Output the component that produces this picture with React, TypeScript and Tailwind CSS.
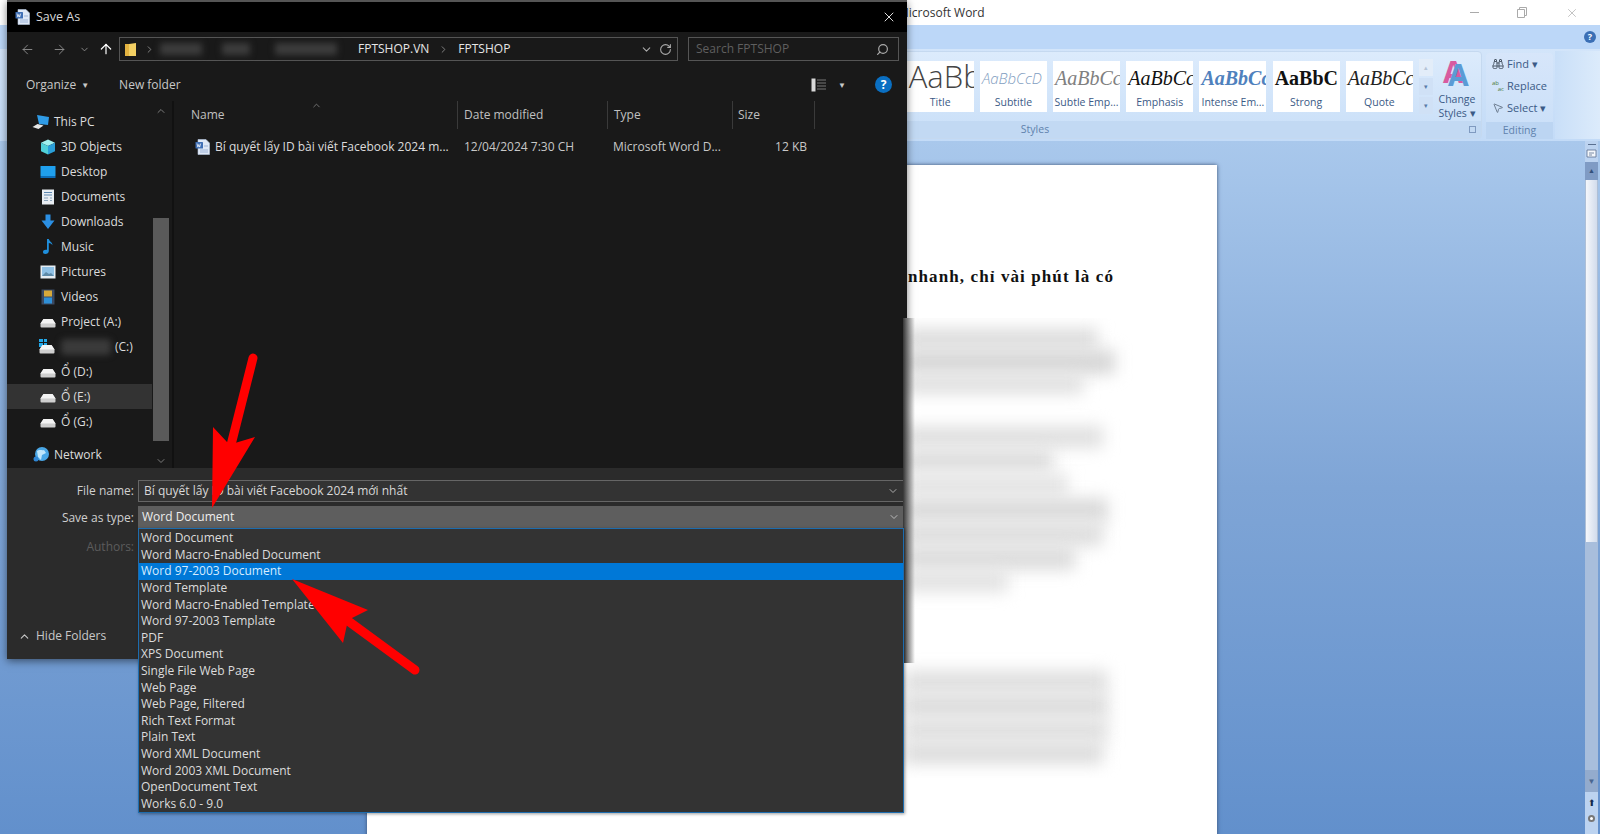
import React from "react";
import { ArrowLeft, ArrowRight, ArrowUp, Binoculars, ChevronDown, ChevronRight, ChevronUp, MousePointer2, RotateCw, Search, X } from "lucide-react";

const saveTypes = [
  "Word Document",
  "Word Macro-Enabled Document",
  "Word 97-2003 Document",
  "Word Template",
  "Word Macro-Enabled Template",
  "Word 97-2003 Template",
  "PDF",
  "XPS Document",
  "Single File Web Page",
  "Web Page",
  "Web Page, Filtered",
  "Rich Text Format",
  "Plain Text",
  "Word XML Document",
  "Word 2003 XML Document",
  "OpenDocument Text",
  "Works 6.0 - 9.0",
];

const styleTiles = [
  { name: "Title", sample: "AaBb", cls: "text-[31px] font-light text-[#444] pb-[4px] leading-[30px]" },
  { name: "Subtitle", sample: "AaBbCcD", cls: "italic text-[15px] text-[#7f9dc0] font-light" },
  { name: "Subtle Emp...", sample: "AaBbCc", cls: "font-['Liberation_Serif',serif] italic text-[20px] text-[#808080]" },
  { name: "Emphasis", sample: "AaBbCc", cls: "font-['Liberation_Serif',serif] italic text-[20px] text-[#111]" },
  { name: "Intense Em...", sample: "AaBbCc", cls: "font-['Liberation_Serif',serif] italic font-bold text-[20px] text-[#4f81bd]" },
  { name: "Strong", sample: "AaBbC", cls: "font-['Liberation_Serif',serif] font-bold text-[20px] text-[#111]" },
  { name: "Quote", sample: "AaBbCc", cls: "font-['Liberation_Serif',serif] italic text-[20px] text-[#222]" },
];

const blurBars = [
  { top: 10, w: 195, h: 22, c: "#dedede" },
  { top: 0, w: 212, h: 24, c: "#d6d6d6" },
  { top: 0, w: 180, h: 20, c: "#e0e0e0" },
  { top: 32, w: 200, h: 22, c: "#e0e0e0" },
  { top: 2, w: 150, h: 22, c: "#dcdcdc" },
  { top: 2, w: 165, h: 22, c: "#e4e4e4" },
  { top: 2, w: 205, h: 24, c: "#dadada" },
  { top: 0, w: 200, h: 24, c: "#dedede" },
  { top: 0, w: 172, h: 24, c: "#dcdcdc" },
  { top: 0, w: 105, h: 22, c: "#e2e2e2" },
  { top: 78, w: 205, h: 24, c: "#e0e0e0" },
  { top: 0, w: 205, h: 24, c: "#dcdcdc" },
  { top: 0, w: 205, h: 24, c: "#e0e0e0" },
  { top: 0, w: 200, h: 22, c: "#dcdcdc" },
];

const DriveIcon = () => (
  <svg width="16" height="11" viewBox="0 0 16 11" className="mt-[4px]">
    <path d="M3.500 1h9L15.500 5.500V8.500a1 1 0 0 1-1 1H1.500a1 1 0 0 1-1-1V5.500z" fill="#cfcfcf" />
    <path d="M0.500 5.500L3.500 1h9L15.500 5.500z" fill="#f4f4f4" />
  </svg>
);

const WordDocIcon = ({ size = 16 }: { size?: number }) => (
  <svg width={size} height={size} viewBox="0 0 16 16">
    <path d="M3 0.500h8l3.500 3.500v11.500H3z" fill="#dfe8f6" stroke="#b6c6df" strokeWidth="0.600" />
    <rect x="0.500" y="3" width="7.500" height="6.500" rx="0.600" fill="#3f6fb5" />
    <path d="M2 4.500l0.900 3.600 0.900-2.600 0.900 2.600L5.700 4.500" fill="none" stroke="#fff" strokeWidth="0.700" />
    <path d="M9 7h4M5 11h8M5 13h8" stroke="#8ba6cf" strokeWidth="0.800" />
  </svg>
);

const navIcons: Record<string, React.ReactNode> = {
  pc: (
    <svg width="18" height="16" viewBox="0 0 18 16">
      <path d="M5 1l12 2-1 8-9-1z" fill="#2f9be6" />
      <path d="M0.500 13l5-3 6 1.500-5 3.500z" fill="#e6e6e6" />
    </svg>
  ),
  cube: (
    <svg width="16" height="16" viewBox="0 0 16 16">
      <path d="M8 0.500l7 3.200-7 3.300-7-3.300z" fill="#9ff0ee" />
      <path d="M1 3.700l7 3.300v8.500l-7-3.300z" fill="#4fd0d8" />
      <path d="M15 3.700l-7 3.300v8.500l7-3.300z" fill="#2a9fd8" />
    </svg>
  ),
  desktop: (
    <svg width="16" height="14" viewBox="0 0 16 14">
      <rect x="0.500" y="1" width="15" height="10" rx="0.500" fill="#1fa0ee" />
      <rect x="0.500" y="11" width="15" height="2" fill="#0b6cb8" />
    </svg>
  ),
  docs: (
    <svg width="14" height="16" viewBox="0 0 14 16">
      <rect x="1" y="0.500" width="12" height="15" fill="#e8edf2" />
      <path d="M3 3.500h8M3 6h8" stroke="#5c87b0" strokeWidth="1.200" />
      <path d="M3 9h4M3 11.500h4M9 9h2M9 11.500h2" stroke="#8aa3b9" strokeWidth="1" />
    </svg>
  ),
  down: (
    <svg width="14" height="16" viewBox="0 0 14 16">
      <path d="M4.500 0.500h5v6h4L7 15 0.500 6.500h4z" fill="#2b8fe3" />
    </svg>
  ),
  music: (
    <svg width="12" height="17" viewBox="0 0 12 17">
      <path d="M5 1h1.800c.4 2.500 3.700 3.200 3.700 6.200-1-1.600-2.400-2-3.700-2.200V13c0 1.800-1.600 3-3.400 3S1 15 1 13.700 2.500 11.400 5 11.800z" fill="#1f8fdc" />
    </svg>
  ),
  pics: (
    <svg width="16" height="14" viewBox="0 0 16 14">
      <rect x="0.500" y="0.500" width="15" height="13" fill="#e6edf2" />
      <rect x="2" y="2" width="12" height="9" fill="#8fc1e5" />
      <path d="M2 11l4-4 3 2 2-1 3 3z" fill="#5d8aa8" />
    </svg>
  ),
  videos: (
    <svg width="14" height="16" viewBox="0 0 14 16">
      <rect x="0.500" y="0.500" width="13" height="15" fill="#3b4a63" />
      <rect x="3" y="1.500" width="8" height="6" fill="#d7a93a" />
      <rect x="3" y="8.500" width="8" height="6" fill="#2f90d8" />
    </svg>
  ),
  cdrive: (
    <span className="relative inline-block h-[16px] w-[18px]">
      <span className="absolute left-0 top-0 grid h-[8px] w-[8px] grid-cols-2 gap-[1px]">
        <span className="bg-[#22a7e8]" />
        <span className="bg-[#22a7e8]" />
        <span className="bg-[#22a7e8]" />
        <span className="bg-[#22a7e8]" />
      </span>
      <span className="absolute bottom-0 left-0">
        <DriveIcon />
      </span>
    </span>
  ),
  net: (
    <svg width="17" height="17" viewBox="0 0 17 17">
      <circle cx="9" cy="8" r="7" fill="#4aa7e6" />
      <path d="M4 5c3-2 5 0 7-1l2 3-4 2-1 5-3-3z" fill="#bfe6fb" />
      <circle cx="3" cy="13" r="2.500" fill="#2f86d4" />
    </svg>
  ),
};

const navItems: { icon: string; label: React.ReactNode; indent: string; active?: boolean }[] = [
  { icon: "pc", label: "This PC", indent: "pl-[25px]" },
  { icon: "cube", label: "3D Objects", indent: "pl-[32px]" },
  { icon: "desktop", label: "Desktop", indent: "pl-[32px]" },
  { icon: "docs", label: "Documents", indent: "pl-[32px]" },
  { icon: "down", label: "Downloads", indent: "pl-[32px]" },
  { icon: "music", label: "Music", indent: "pl-[32px]" },
  { icon: "pics", label: "Pictures", indent: "pl-[32px]" },
  { icon: "videos", label: "Videos", indent: "pl-[32px]" },
  { icon: "drive", label: "Project (A:)", indent: "pl-[32px]" },
  {
    icon: "cdrive",
    label: (
      <span className="flex items-center gap-[4px]">
        <span className="h-[16px] w-[50px] rounded-sm bg-[#3a3a3a] blur-[3px]" />
        (C:)
      </span>
    ),
    indent: "pl-[32px]",
  },
  { icon: "drive", label: "Ổ (D:)", indent: "pl-[32px]" },
  { icon: "drive", label: "Ổ (E:)", indent: "pl-[32px]", active: true },
  { icon: "drive", label: "Ổ (G:)", indent: "pl-[32px]" },
];

function Ribbon() {
  return (
    <div className="flex h-[92px] shrink-0 bg-gradient-to-b from-[#d3e5fa] to-[#c3dbf7] pb-[2px] pt-[2px]">
      <div className="ml-[588px] flex w-[894px] flex-col rounded-sm border border-[#c5d9f0] bg-gradient-to-b from-[#dcebfc] to-[#c9dff8]">
        <div className="flex flex-1 items-center justify-end pr-[2px]">
          {styleTiles.map((t) => (
            <div key={t.name} className="mr-[6.200px] flex h-[51px] w-[67px] flex-col items-center overflow-hidden bg-white">
              <span className={`flex h-[34px] w-full shrink-0 items-center whitespace-nowrap pl-[2px] ${t.cls}`}>{t.sample}</span>
              <span className="whitespace-nowrap text-[10.500px] leading-[15px] text-[#3b5a86]">{t.name}</span>
            </div>
          ))}
          <div className="flex h-[55px] w-[14px] flex-col gap-[2px] text-[7px] leading-none text-[#5a7ba8]">
            <span className="flex flex-1 items-center justify-center bg-[#e3edf9] text-[#b5c4d6]">▴</span>
            <span className="flex flex-1 items-center justify-center bg-[#d0e1f6]">▾</span>
            <span className="flex flex-1 items-center justify-center bg-[#d0e1f6]">▾</span>
          </div>
          <div className="ml-[2px] flex w-[44px] flex-col items-center">
            <span className="relative h-[36px] w-[30px] text-[30px] font-bold leading-[36px]">
              <span className="absolute left-[1px] top-0 text-[#d85ba0]">A</span>
              <span className="absolute left-[6px] top-[3px] text-[#5b9bd5]">A</span>
            </span>
            <span className="pt-[2px] text-center text-[10.500px] leading-[14px] text-[#3b5a86]">
              <span className="block">Change</span>
              <span className="block whitespace-nowrap">Styles ▾</span>
            </span>
          </div>
        </div>
        <div className="relative flex h-[17px] items-center justify-center bg-[#c2d9f3] text-[10.500px] text-[#5f82ad]">
          Styles
          <span className="absolute right-[5px] top-[5px] h-[7px] w-[7px] border border-[#7f9ac0]" />
        </div>
      </div>
      <div className="ml-[4px] mt-[2px] flex w-[67px] flex-col rounded-sm bg-gradient-to-b from-[#d7e6fa] to-[#c9dff8]">
        <div className="flex flex-1 flex-col gap-[5px] pl-[6px] pt-[2px] text-[11px] leading-[17px] text-[#3b5a86]">
          <span className="flex items-center gap-[3px] whitespace-nowrap">
            <Binoculars size={12} className="text-[#4d5a6a]" />
            Find ▾
          </span>
          <span className="flex items-center gap-[3px] whitespace-nowrap">
            <span className="flex w-[12px] flex-col text-[6px] leading-[6px] text-[#4a7c3a]">
              <span>ab</span>
              <span className="text-right">ac</span>
            </span>
            Replace
          </span>
          <span className="flex items-center gap-[3px] whitespace-nowrap">
            <MousePointer2 size={12} className="text-[#6f7f93]" />
            Select ▾
          </span>
        </div>
        <div className="flex h-[17px] items-center justify-center bg-[#bcd5f2] text-[10.500px] text-[#5f82ad]">Editing</div>
      </div>
      <div className="ml-[2px] flex-1 bg-gradient-to-r from-[#c9dff8] to-[#dcebfb]" />
    </div>
  );
}

function WordWindow() {
  return (
    <div className="flex h-[834px] w-[1600px] flex-col bg-white">
      <div className="flex h-[25px] shrink-0 items-center bg-white text-[#333]">
        <span className="ml-[898px] text-[12px]">Microsoft Word</span>
        <div className="ml-auto flex items-center gap-[38px] pr-[21px] text-[#9a9a9a]">
          <span className="h-px w-[9px] bg-[#aaa]" />
          <svg width="10" height="11" viewBox="0 0 10 11">
            <path d="M0.500 2.500h7v8h-7zM2.500 2.500v-2h7v8h-2" fill="none" stroke="#aaa" strokeWidth="1" />
          </svg>
          <X size={14} strokeWidth={1} />
        </div>
      </div>
      <div className="flex h-[24px] shrink-0 items-center justify-end bg-[#bcd7f8] pr-[4px]">
        <span className="flex h-[12px] w-[12px] items-center justify-center rounded-full bg-[#3b6fb5] text-[9px] font-bold text-white">?</span>
      </div>
      <Ribbon />
      <div className="flex min-h-0 flex-1 bg-gradient-to-b from-[#a9c8ec] via-[#7fa5d6] to-[#6290cc]">
        <div className="ml-[367px] mt-[24px] h-[700px] w-[850px] bg-white pl-[541px] pt-[99px] shadow-[0_0_4px_#3a4f70]">
          <p className="w-[230px] whitespace-nowrap font-['Liberation_Serif',serif] text-[17px] font-bold tracking-[1.100px] text-[#111]">nhanh, chỉ vài phút là có</p>
        </div>
        <div className="ml-auto mr-[2px] flex w-[13px] flex-col items-center bg-[#bcd3f0] pt-[3px]">
          <span className="h-[1px] w-[8px] bg-[#5a7090]" />
          <svg width="11" height="11" viewBox="0 0 11 11" className="mt-[3px]">
            <path d="M1 2h9v7H1z" fill="#f4f7fb" stroke="#5a7090" strokeWidth="0.800" />
            <path d="M3 5h5M3 7h3" stroke="#5a7090" strokeWidth="0.800" />
          </svg>
          <span className="mt-[3px] flex h-[18px] w-full items-center justify-center bg-[#7f9bc4] text-[7px] text-[#34507a]">▲</span>
          <span className="h-[362px] w-full border-x border-[#aebfd6] bg-gradient-to-r from-[#f5f7fb] to-[#d2dcec]" />
          <span className="h-[228px] w-full bg-[#a8bedc]" />
          <span className="flex h-[22px] w-full items-center justify-center bg-[#93abcd] text-[8px] text-[#4a6690]">▼</span>
          <span className="mt-[5px] text-[9px] leading-[12px] text-[#12284a]">⬆</span>
          <span className="mt-[6px] h-[7px] w-[7px] rounded-full border-2 border-[#777] bg-white" />
        </div>
      </div>
    </div>
  );
}

function AddressBar() {
  return (
    <div className="flex h-[36px] shrink-0 items-center pb-[2px]">
      <div className="flex w-[112px] items-center pl-[13px] text-[#8c8c8c]">
        <ArrowLeft size={15} strokeWidth={1.500} />
        <ArrowRight size={15} strokeWidth={1.500} className="ml-[17px]" />
        <ChevronDown size={11} className="ml-[12px]" />
        <ArrowUp size={16} strokeWidth={1.800} className="ml-[8px] text-white" />
      </div>
      <div className="flex h-[24px] w-[559px] items-center border border-[#555] text-[12px] text-[#e6e6e6]">
        <svg width="13" height="15" viewBox="0 0 13 15" className="ml-[4px]">
          <path d="M1 2h4l7-1v13H1z" fill="#f2cf63" />
          <path d="M1 2h4v12H1z" fill="#e3b341" />
        </svg>
        <ChevronRight size={11} className="ml-[7px] text-[#888]" />
        <span className="ml-[5px] h-[12px] w-[42px] bg-[#3c3c3c] blur-[3px]" />
        <span className="ml-[20px] h-[12px] w-[28px] bg-[#3c3c3c] blur-[3px]" />
        <span className="ml-[25px] h-[12px] w-[62px] bg-[#3c3c3c] blur-[3px]" />
        <span className="ml-[21px]">FPTSHOP.VN</span>
        <ChevronRight size={11} className="ml-[9px] text-[#888]" />
        <span className="ml-[9px]">FPTSHOP</span>
        <ChevronDown size={13} className="ml-auto mr-[6px] text-[#aaa]" />
        <RotateCw size={13} className="mr-[5px] text-[#aaa]" />
      </div>
      <div className="ml-[10px] flex h-[24px] w-[211px] items-center justify-between border border-[#555] pl-[7px] pr-[9px] text-[12px] text-[#5f5f5f]">
        <span>Search FPTSHOP</span>
        <Search size={13} strokeWidth={2.200} className="-scale-x-100 text-[#aaa]" />
      </div>
    </div>
  );
}

function NavTree() {
  return (
    <div className="flex h-[368px] w-[165px] shrink-0">
      <div className="flex w-[145px] flex-col pt-[8px] text-[12px] text-[#dcdcdc]">
        {navItems.map((n, i) => (
          <div key={i} className={`flex h-[25px] shrink-0 items-center gap-[4px] ${n.indent} ${n.active ? "bg-[#333]" : ""}`}>
            <span className="flex w-[18px] items-center justify-center">{n.icon === "drive" ? <DriveIcon /> : navIcons[n.icon]}</span>
            {n.label}
          </div>
        ))}
        <div className="mt-[8px] flex h-[25px] items-center gap-[4px] pl-[25px]">
          <span className="flex w-[18px] items-center justify-center">{navIcons.net}</span>
          Network
        </div>
      </div>
      <div className="flex w-[18px] flex-col items-center bg-[#191919] text-[#7a7a7a]">
        <ChevronUp size={12} className="mt-[4px]" />
        <span className="mt-[101px] h-[223px] w-[16px] bg-[#5a5a5a]" />
        <ChevronDown size={12} className="mt-[14px]" />
      </div>
    </div>
  );
}

function FilePane() {
  return (
    <div className="relative flex-1 border-l-2 border-[#111] text-[12px]">
      <ChevronUp size={11} className="absolute left-[137px] top-[-1px] text-[#777]" />
      <div className="flex h-[28px] items-center text-[#c0c0c0]">
        <span className="w-[283px] pl-[17px]">Name</span>
        <span className="h-[28px] w-[150px] border-l border-[#3a3a3a] pl-[6px] leading-[28px]">Date modified</span>
        <span className="h-[28px] w-[125px] border-l border-[#3a3a3a] pl-[6px] leading-[28px]">Type</span>
        <span className="h-[28px] w-[83px] border-x border-[#3a3a3a] pl-[5px] leading-[28px]">Size</span>
      </div>
      <div className="mt-[6px] flex h-[24px] items-center text-[#c8c8c8]">
        <span className="flex w-[283px] items-center gap-[4px] pl-[21px] text-[#dcdcdc]">
          <WordDocIcon />
          <span className="whitespace-nowrap">Bí quyết lấy ID bài viết Facebook 2024 m...</span>
        </span>
        <span className="w-[150px] pl-[7px]">12/04/2024 7:30 CH</span>
        <span className="w-[125px] pl-[6px]">Microsoft Word D...</span>
        <span className="w-[75px] text-right">12 KB</span>
      </div>
    </div>
  );
}

function SaveFields() {
  return (
    <div className="relative flex h-[191px] shrink-0 flex-col bg-[#2b2b2b] pr-[3px] text-[12px]">
      <div className="mt-[12px] flex h-[22px] items-center">
        <span className="w-[127px] text-right text-[#cfcfcf]">File name:</span>
        <div className="ml-[4px] flex h-[22px] flex-1 items-center justify-between border border-[#666] bg-[#333] pl-[5px] pr-[4px] text-[#d8d8d8]">
          <span>Bí quyết lấy ID bài viết Facebook 2024 mới nhất</span>
          <ChevronDown size={12} className="text-[#aaa]" />
        </div>
      </div>
      <div className="mt-[4px] flex h-[23px] items-center">
        <span className="w-[127px] text-right text-[#cfcfcf]">Save as type:</span>
        <div className="ml-[4px] flex h-[23px] flex-1 items-center justify-between border-b border-[#2f7fc0] bg-[#5e5e5e] pl-[4px] pr-[4px] text-[#eee]">
          <span>Word Document</span>
          <ChevronDown size={12} className="text-[#bbb]" />
        </div>
      </div>
      <div className="mt-[7px] flex h-[22px] items-center">
        <span className="w-[127px] text-right text-[#5c5c5c]">Authors:</span>
      </div>
      <div className="mt-auto flex h-[46px] items-center gap-[5px] pl-[11px] text-[#c8c8c8]">
        <ChevronUp size={13} />
        Hide Folders
      </div>
    </div>
  );
}

function SaveDialog() {
  return (
    <div className="absolute left-[7px] top-0 flex h-[659px] w-[900px] flex-col border-t-2 border-[#555] bg-[#191919] shadow-[0_2px_8px_rgba(0,0,0,0.5)]">
      <div className="flex h-[30px] shrink-0 items-center bg-black pl-[8px] pr-[10px] text-[12.500px] text-[#d8d8d8]">
        <WordDocIcon />
        <span className="ml-[5px]">Save As</span>
        <X size={16} strokeWidth={1.500} className="ml-auto text-[#ddd]" />
      </div>
      <AddressBar />
      <div className="flex h-[33px] shrink-0 items-center pl-[19px] pr-[15px] text-[12px] text-[#c8c8c8]">
        <span>Organize</span>
        <span className="ml-[5px] text-[8px]">▼</span>
        <span className="ml-[30px]">New folder</span>
        <svg width="16" height="14" viewBox="0 0 16 14" className="ml-auto">
          <rect x="0.500" y="0.500" width="4" height="13" fill="#d8d8d8" />
          <path d="M6 2h9M6 5h9M6 8h9M6 11h9" stroke="#777" strokeWidth="1" />
        </svg>
        <span className="ml-[11px] text-[8px]">▼</span>
        <span className="ml-[29px] flex h-[17px] w-[17px] items-center justify-center rounded-full bg-[#0a6fc2] text-[12px] font-bold text-white">?</span>
      </div>
      <div className="flex min-h-0 flex-1">
        <NavTree />
        <FilePane />
      </div>
      <SaveFields />
    </div>
  );
}

export default function App() {
  return (
    <div className="relative h-[834px] w-[1600px] overflow-hidden font-['Open_Sans','Liberation_Sans',sans-serif]">
      <WordWindow />
      <SaveDialog />

      {/* blurred body text from the screenshot, it overlaps the dialog edge */}
      <div className="absolute left-[903px] top-[318px] flex h-[460px] w-[240px] flex-col overflow-hidden bg-white">
        {blurBars.map((b, i) => (
          <div key={i} className="shrink-0 blur-[8px]" style={{ marginTop: b.top, width: b.w, height: b.h, backgroundColor: b.c }} />
        ))}
        <div className="absolute left-0 top-0 h-[345px] w-[12px] bg-gradient-to-r from-[#333] to-transparent" />
      </div>

      <div className="absolute left-[138px] top-[528px] flex h-[285px] w-[766px] flex-col border border-[#1d6cae] bg-[#333] pt-[1px] text-[12px] text-[#dcdcdc] shadow-[1px_1px_3px_rgba(0,0,0,0.4)]">
        {saveTypes.map((t, i) => (
          <div key={t} className={`flex h-[16.600px] items-center pl-[2px] ${i === 2 ? "bg-[#0078d7] text-[#d6ecff]" : ""}`}>
            {t}
          </div>
        ))}
      </div>

      {/* red arrows drawn on the screenshot */}
      <svg className="absolute left-0 top-0" width="1600" height="834" viewBox="0 0 1600 834">
        <path d="M253 358L231 445" stroke="#ff0000" strokeWidth="9" strokeLinecap="round" />
        <path d="M213 427L227 442L235 443L255 437L212 508Z" fill="#ff0000" />
        <path d="M415 670L340 615" stroke="#ff0000" strokeWidth="9" strokeLinecap="round" />
        <path d="M292 579L368 610L348 620L343 643Z" fill="#ff0000" />
      </svg>
    </div>
  );
}
